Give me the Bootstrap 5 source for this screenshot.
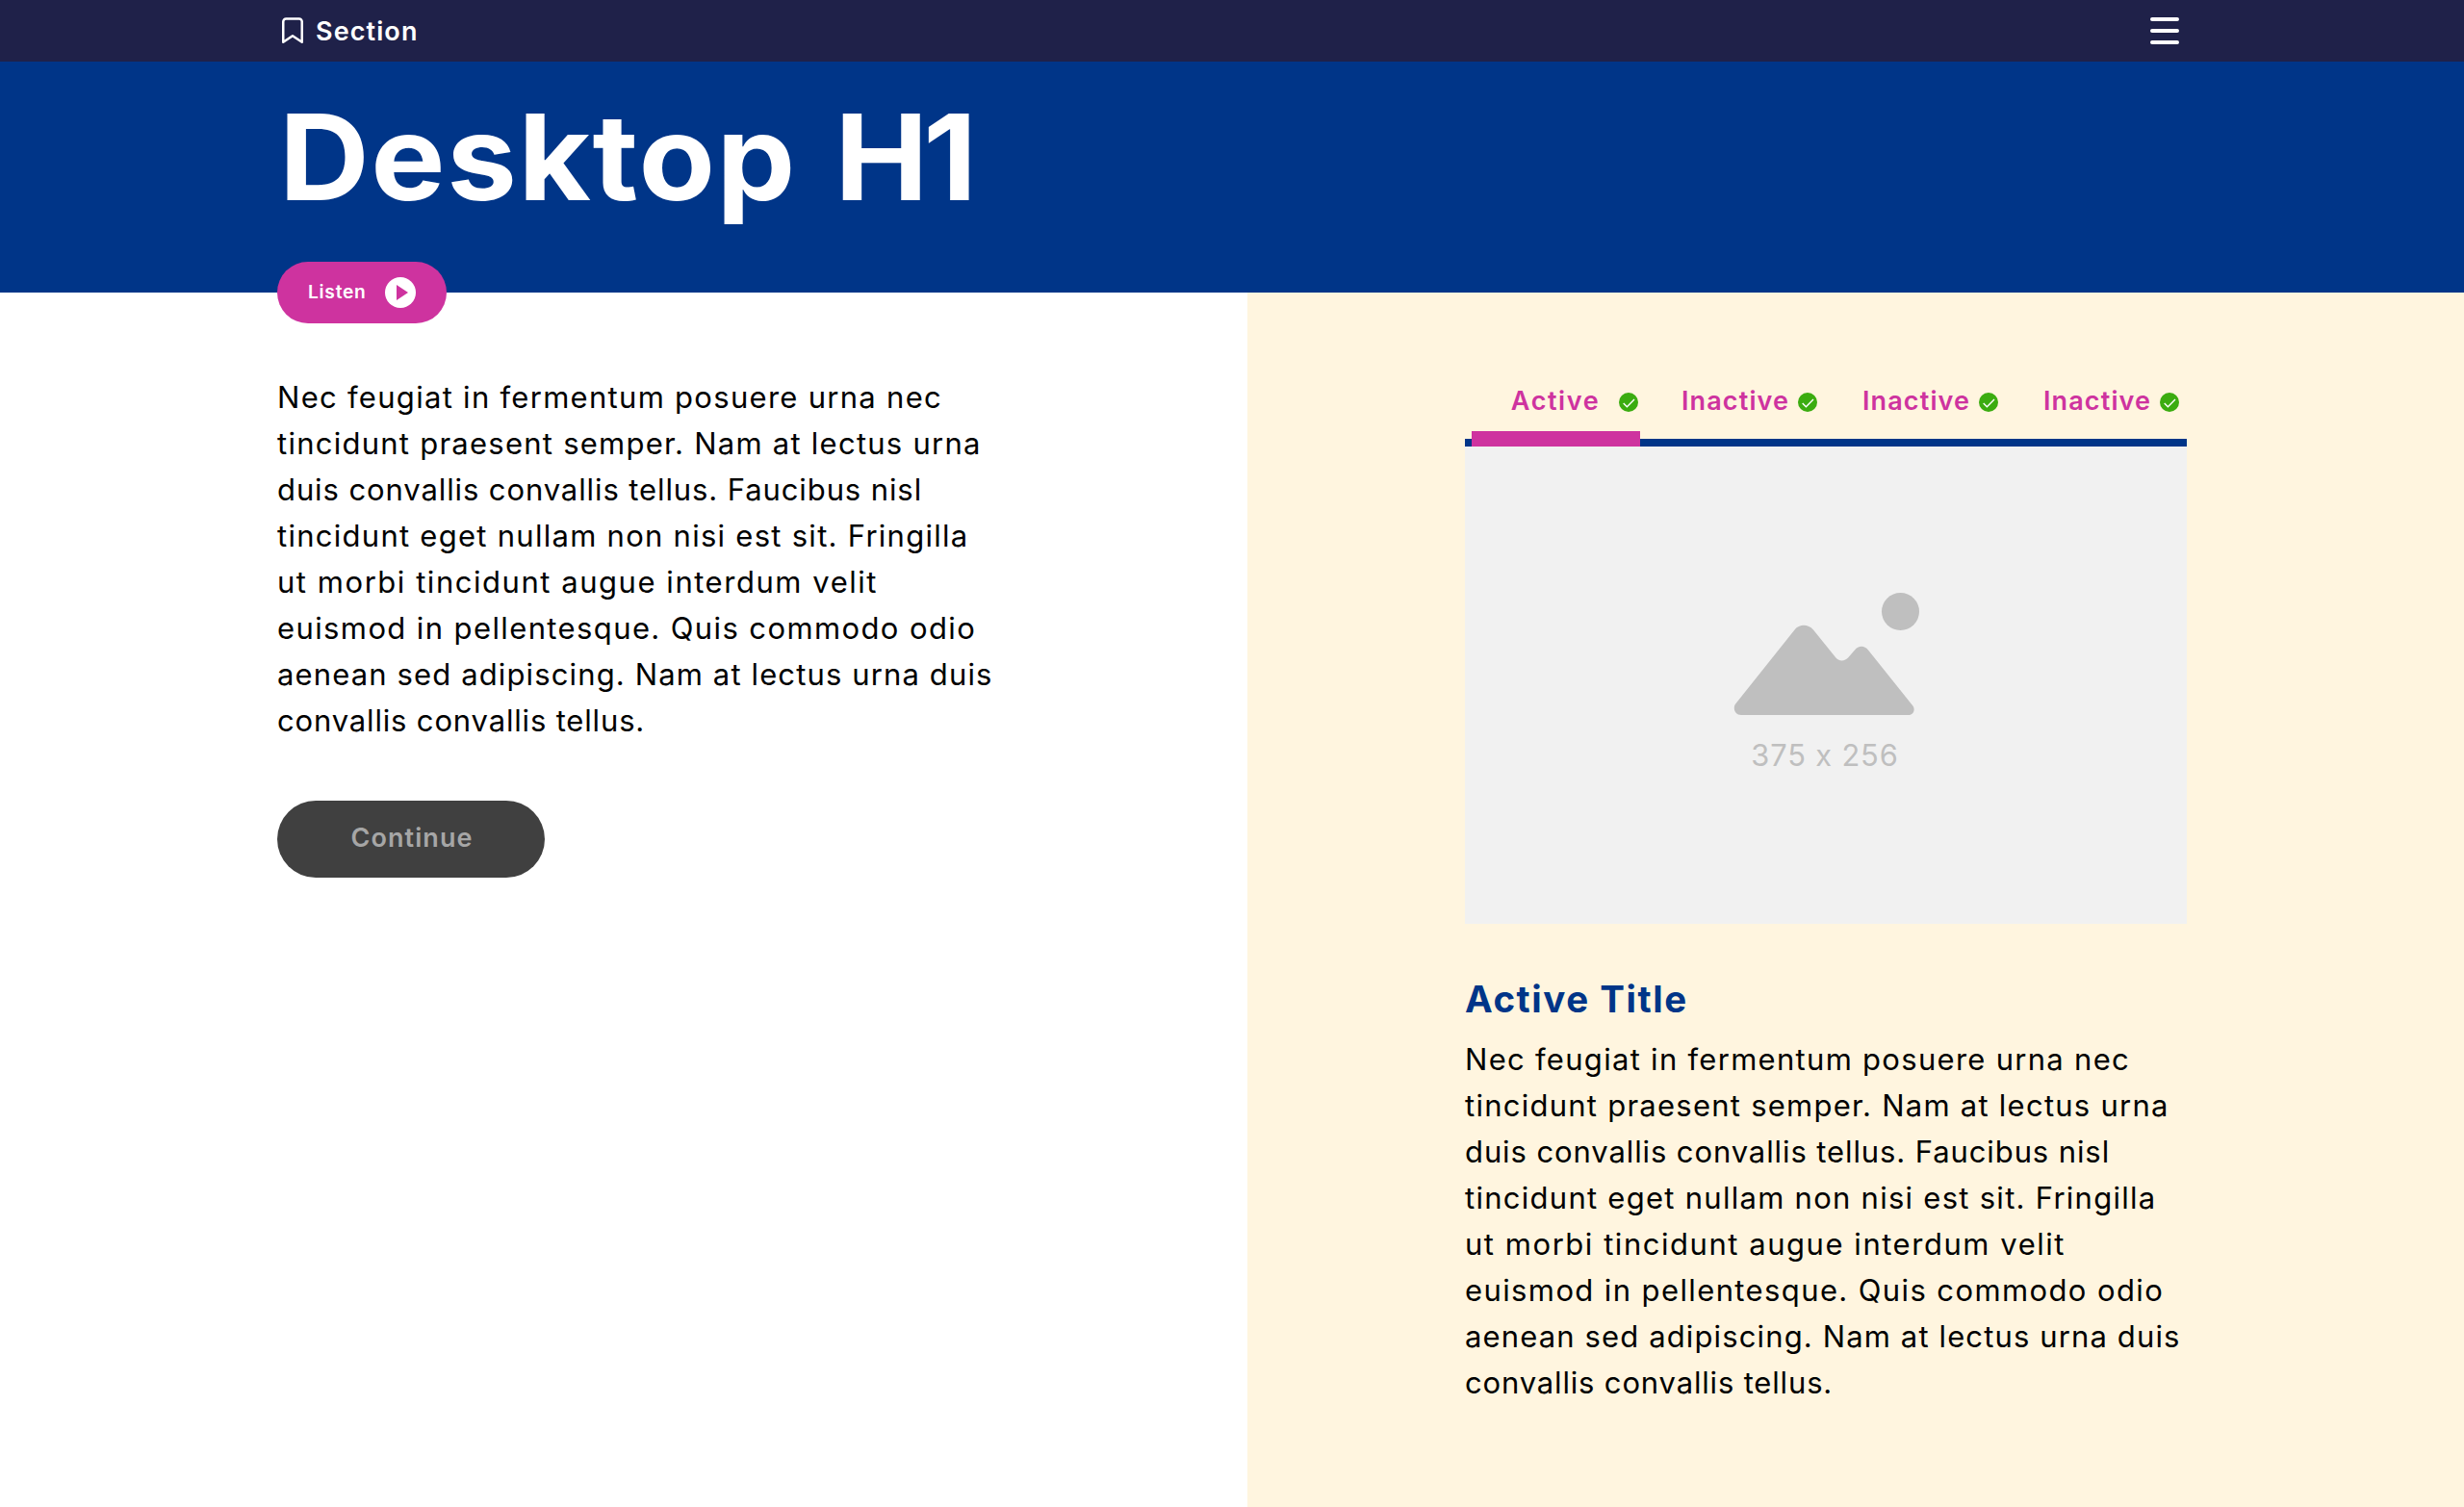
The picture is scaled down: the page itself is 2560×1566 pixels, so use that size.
<!DOCTYPE html>
<html lang="en">
<head>
<meta charset="utf-8">
<meta name="viewport" content="width=device-width, initial-scale=1">
<title>Desktop H1</title>
<link href="https://cdn.jsdelivr.net/npm/bootstrap@5.3.0/dist/css/bootstrap.min.css" rel="stylesheet">
<style>
  :root { --navy: #1f2149; --blue: #003588; --pink: #ce339f; --cream: #fff5df; --green: #3bac10; }
  body { font-family: Inter, "Liberation Sans", sans-serif; color: #000; }
  svg { display: block; flex: none; }
  .gutter { padding-left: 288px; padding-right: 288px; }
  .topbar { height: 64px; background: var(--navy); }
  .section-link { gap: 8px; font-size: 27px; font-weight: 600; letter-spacing: 1.1px; line-height: 1; }
  .menu-btn { padding: 0 8px; background: none; border: 0; }
  .banner { height: 240px; background: var(--blue); padding-top: 27px; }
  .page-title { margin-left: 2px; font-size: 123.7px; font-weight: 700; line-height: 144px; letter-spacing: 1.5px; word-spacing: 6.5px; white-space: nowrap; transform: scaleX(1.05); transform-origin: left; width: max-content; }
  .page-title span { letter-spacing: -5px; }
  .listen-btn { margin-top: 37px; width: 176px; height: 64px; padding: 0 32px 0 32px; background: var(--pink); }
  .listen-btn span { font-size: 19.2px; font-weight: 600; letter-spacing: .75px; line-height: 1; padding-bottom: 1px; }
  .split { height: 1262px; }
  .reading { width: 1296px; padding: 85px 0 0 288px; }
  .explore { background: var(--cream); padding: 84px 288px 0 226px; }
  .copy { font-size: 31px; line-height: 48px; white-space: nowrap; }
  .copy span { display: block; }
  .copy span:nth-child(1) { letter-spacing: 1.29px; }
  .copy span:nth-child(2) { letter-spacing: 1.25px; }
  .copy span:nth-child(3) { letter-spacing: .9px; }
  .copy span:nth-child(4) { letter-spacing: 1.27px; }
  .copy span:nth-child(5) { letter-spacing: 1.54px; }
  .copy span:nth-child(6) { letter-spacing: 1.39px; }
  .copy span:nth-child(7) { letter-spacing: 1.13px; }
  .copy span:nth-child(8) { letter-spacing: .84px; }
  .continue-btn { margin-top: 59px; width: 278px; height: 80px; padding: 0 0 2px 2px; font-size: 27px; font-weight: 600; letter-spacing: 1.08px; }
  .continue-btn:disabled { background: #404040; color: #a6a6a6; border: 0; opacity: 1; }
  .tabs { height: 76px; border-bottom: 8px solid var(--blue); padding: 0 8px 0 6.5px; flex-wrap: nowrap; }
  .tabs .nav-link { padding: 0; height: 76px; color: var(--pink); font-size: 27px; font-weight: 600; letter-spacing: 1.13px; line-height: 58px; }
  .tabs .nav-link span { width: 121px; }
  .tabs svg { margin-top: 20px; }
  .tabs .nav-link.active { width: 175.3px; padding-right: 2px; border-bottom: 16px solid var(--pink); letter-spacing: 1.6px; }
  .tabs .nav-link.active span { width: 112px; }
  .tabs .later { width: 188px; }
  .tabs .later:nth-child(2) { width: 184.2px; }
  .picture { height: 496px; background: #f1f1f1; color: #bfbfbf; padding-top: 152px; }
  .picture-size { margin: 1px 2px 0 0; font-size: 30.8px; line-height: 48px; letter-spacing: .85px; }
  .active-title { margin-top: 54px; color: var(--blue); font-size: 38.5px; font-weight: 700; line-height: 48px; letter-spacing: 1.55px; }
  .active-copy { padding-top: 15px; }
</style>
</head>
<body>
<header>
  <nav class="topbar gutter d-flex align-items-center justify-content-between">
    <a href="#" class="section-link d-flex align-items-center text-white text-decoration-none">
      <svg width="32" height="32" viewBox="0 0 32 32" fill="none" stroke="#fff" stroke-width="2.5" stroke-linejoin="round"><path d="M6.250 27.800V6.500a3 3 0 0 1 3-3h13.500a3 3 0 0 1 3 3v21.300l-9.750-6.500z"/></svg>
      <span>Section</span>
    </a>
    <button class="menu-btn" aria-label="Menu">
      <svg width="30" height="28" viewBox="0 0 30 28" stroke="#fff" stroke-width="4" stroke-linecap="round"><path d="M2 2h26M2 14h26M2 26h26"/></svg>
    </button>
  </nav>
  <div class="banner gutter">
    <h1 class="page-title text-white mb-0">Desktop <span>H</span>1</h1>
    <button class="listen-btn btn rounded-pill border-0 text-white d-flex align-items-center justify-content-between">
      <span>Listen</span>
      <svg width="32" height="32" viewBox="0 0 32 32"><circle cx="16" cy="16" r="16" fill="#fff"/><path d="M12 8l12 8-12 8z" fill="#ce339f"/></svg>
    </button>
  </div>
</header>
<main class="split d-flex">
  <section class="reading flex-shrink-0">
    <p class="copy mb-0">
      <span>Nec feugiat in fermentum posuere urna nec</span>
      <span>tincidunt praesent semper. Nam at lectus urna</span>
      <span>duis convallis convallis tellus. Faucibus nisl</span>
      <span>tincidunt eget nullam non nisi est sit. Fringilla</span>
      <span>ut morbi tincidunt augue interdum velit</span>
      <span>euismod in pellentesque. Quis commodo odio</span>
      <span>aenean sed adipiscing. Nam at lectus urna duis</span>
      <span>convallis convallis tellus.</span>
    </p>
    <button class="continue-btn btn rounded-pill" disabled>Continue</button>
  </section>
  <section class="explore flex-grow-1">
    <div class="tabs nav">
      <a href="#" class="nav-link active d-flex justify-content-end">
        <span>Active</span>
        <svg width="20" height="20" viewBox="0 0 20 20"><circle cx="10" cy="10" r="10" fill="#3bac10"/><path d="M4.7 11l3.7 3.8L16 7" fill="none" stroke="#fff" stroke-width="1.4"/></svg>
      </a>
      <a href="#" class="nav-link later d-flex justify-content-end">
        <span>Inactive</span>
        <svg width="20" height="20" viewBox="0 0 20 20"><circle cx="10" cy="10" r="10" fill="#3bac10"/><path d="M4.7 11l3.7 3.8L16 7" fill="none" stroke="#fff" stroke-width="1.4"/></svg>
      </a>
      <a href="#" class="nav-link later d-flex justify-content-end">
        <span>Inactive</span>
        <svg width="20" height="20" viewBox="0 0 20 20"><circle cx="10" cy="10" r="10" fill="#3bac10"/><path d="M4.7 11l3.7 3.8L16 7" fill="none" stroke="#fff" stroke-width="1.4"/></svg>
      </a>
      <a href="#" class="nav-link later d-flex justify-content-end">
        <span>Inactive</span>
        <svg width="20" height="20" viewBox="0 0 20 20"><circle cx="10" cy="10" r="10" fill="#3bac10"/><path d="M4.7 11l3.7 3.8L16 7" fill="none" stroke="#fff" stroke-width="1.4"/></svg>
      </a>
    </div>
    <div class="picture d-flex flex-column align-items-center">
      <svg width="194" height="144" viewBox="0 0 194 144" fill="#bfbfbf"><circle cx="174.5" cy="19.5" r="19.5"/><path d="M3.5 115L64.500 38.500C69.500 32.300 78.500 32.300 84 38.500L107 67C110.500 71.500 116.500 71.500 120.500 67L127 59.500C131 54.600 137 54.600 141 59.500L187 117C190.500 121 188 127 183 127H9C2.500 127-.300 119.500 3.500 115z"/></svg>
      <div class="picture-size">375 x 256</div>
    </div>
    <h2 class="active-title mb-0">Active Title</h2>
    <p class="copy active-copy mb-0">
      <span>Nec feugiat in fermentum posuere urna nec</span>
      <span>tincidunt praesent semper. Nam at lectus urna</span>
      <span>duis convallis convallis tellus. Faucibus nisl</span>
      <span>tincidunt eget nullam non nisi est sit. Fringilla</span>
      <span>ut morbi tincidunt augue interdum velit</span>
      <span>euismod in pellentesque. Quis commodo odio</span>
      <span>aenean sed adipiscing. Nam at lectus urna duis</span>
      <span>convallis convallis tellus.</span>
    </p>
  </section>
</main>
<script src="https://cdn.jsdelivr.net/npm/bootstrap@5.3.0/dist/js/bootstrap.bundle.min.js"></script>
</body>
</html>
